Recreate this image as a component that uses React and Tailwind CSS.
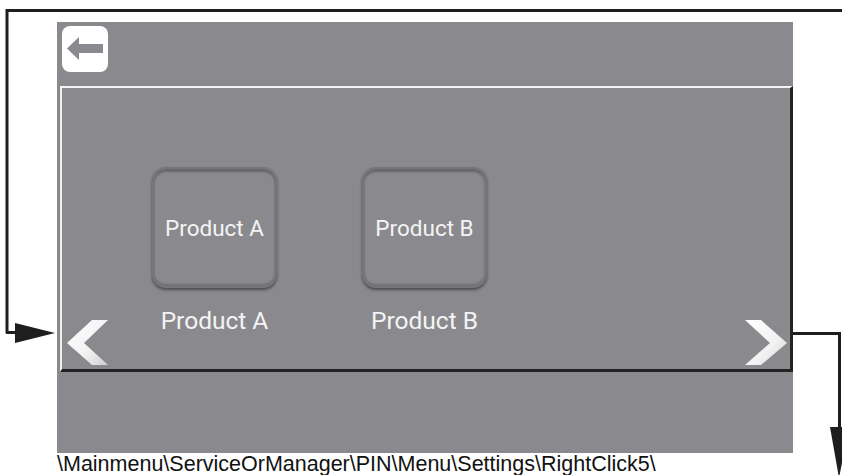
import React from "react";

function Chevron({ dir }) {
  const pts =
    dir === "left"
      ? "3,23 28,0 44,0 20,23 44,45 28,45"
      : "0,0 16,0 42,23 16,45 0,45 25,23";
  const id = "g" + dir;
  return (
    <svg width="44" height="46" viewBox="0 0 44 46">
      <defs>
        <linearGradient id={id} x1="0" y1="0" x2="1" y2="1">
          <stop offset="0" stopColor="#ffffff" />
          <stop offset="0.6" stopColor="#f2f2f2" />
          <stop offset="1" stopColor="#cfcfcf" />
        </linearGradient>
      </defs>
      <polygon points={pts} fill={`url(#${id})`} />
    </svg>
  );
}

function ProductTile({ name }) {
  return (
    <div className="flex w-[125px] flex-col items-center">
      <div className="flex h-[121px] w-[125px] items-center justify-center rounded-[14px] border-2 border-[#76767a] bg-[#8a8a8e] shadow-[0_2px_3px_rgba(0,0,0,0.45),inset_0_3px_2px_rgba(0,0,0,0.25),inset_0_-2px_2px_rgba(0,0,0,0.2)]">
        <span className="whitespace-nowrap text-[22.5px] leading-[26px] text-[#f4f4f4]" style={{ fontFamily: "Roboto, sans-serif" }}>
          {name}
        </span>
      </div>
      <span className="mt-[19px] whitespace-nowrap text-[24.5px] leading-[28px] text-[#f4f4f4]" style={{ fontFamily: "Roboto, sans-serif" }}>
        {name}
      </span>
    </div>
  );
}

export default function App() {
  return (
    <div className="relative h-[475px] w-[842px] overflow-hidden bg-white">
      <div className="ml-[57px] pt-[22px]">
        <div className="flex h-[431px] w-[736px] flex-col bg-[#8a8a8e]">
          <div className="h-[64px] pl-[5px] pt-[4px]">
            <div className="flex h-[46px] w-[46px] items-center justify-center rounded-[8px] bg-white">
              <svg width="46" height="46" viewBox="0 0 46 46">
                <polygon points="5,22.5 17,11 17,18 41,18 41,27 17,27 17,34" fill="#8a8a8e" />
              </svg>
            </div>
          </div>
          <div className="relative ml-[3px] h-[286px] border-b-[3px] border-l-2 border-r-[3px] border-t-2 border-b-[#232323] border-l-[#f0f0f0] border-r-[#232323] border-t-[#f4f4f4]">
            <div className="flex gap-[85px] pl-[90px] pt-[79px]">
              <ProductTile name="Product A" />
              <ProductTile name="Product B" />
            </div>
            <div className="absolute left-[2px] top-[232px]">
              <Chevron dir="left" />
            </div>
            <div className="absolute left-[683px] top-[232px]">
              <Chevron dir="right" />
            </div>
          </div>
          <div className="flex-1" />
        </div>
        <div
          className="whitespace-nowrap text-[21.5px] leading-[22px] text-[#111]"
          style={{ fontFamily: "'Liberation Sans Narrow', 'Arial Narrow', 'Liberation Sans', sans-serif", fontStretch: "condensed" }}
        >
          \Mainmenu\ServiceOrManager\PIN\Menu\Settings\RightClick5\
        </div>
      </div>
      <svg className="pointer-events-none absolute left-0 top-0" width="842" height="475" viewBox="0 0 842 475">
        <g fill="none" stroke="#1e1e1e" strokeWidth="3">
          <polyline points="7,333 7,10.5 842,10.5" />
          <line x1="6" y1="332.5" x2="18" y2="332.5" />
          <polyline points="793,333.5 839.5,333.5 839.5,432" />
        </g>
        <polygon points="15,323 55,333 15,343" fill="#1e1e1e" />
        <polygon points="830,427 849,427 839,478" fill="#1e1e1e" />
      </svg>
    </div>
  );
}
